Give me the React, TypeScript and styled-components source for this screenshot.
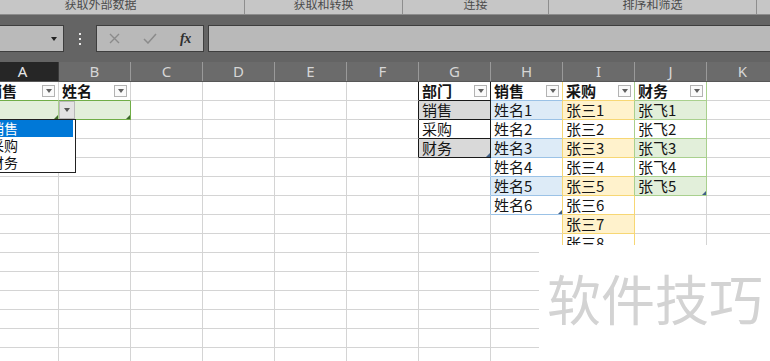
import styled, { createGlobalStyle } from "styled-components";

const GlobalStyle = createGlobalStyle`
  html, body {
    margin: 0;
    padding: 0;
  }
  body {
    width: 770px;
    height: 361px;
    overflow: hidden;
    background: #fff;
    font-family: "Noto Sans CJK SC", "Noto Sans", sans-serif;
  }
`;

type CellSpec = {
  text?: string;
  bg?: string;
  right?: string;
  bottom?: string;
  filter?: boolean;
  handle?: string;
  picker?: boolean;
};

const COLS = ["A", "B", "C", "D", "E", "F", "G", "H", "I", "J", "K"];
const ROW_COUNT = 15;

const BLUE = { bg: "#ddebf7", line: "#9bc2e6" };
const GOLD = { bg: "#fff2cc", line: "#f7d774" };
const GREEN = { bg: "#e2efda", line: "#a9d08e" };
const BLACK = "#1a1a1a";

const groups = [
  { label: "获取外部数据", width: 288, first: true },
  { label: "获取和转换", width: 158 },
  { label: "连接", width: 146 },
  { label: "排序和筛选", width: 208 },
  { label: "", width: 60 },
];

const buildCells = () => {
  const cells: Record<string, CellSpec> = {};
  const set = (key: string, spec: CellSpec) => {
    cells[key] = { ...cells[key], ...spec };
  };

  set("A1", { text: "销售", filter: true, bottom: "#70ad47" });
  set("B1", { text: "姓名", filter: true, bottom: "#70ad47" });
  set("A2", { bg: GREEN.bg, bottom: "#70ad47", right: "#a9d08e", picker: true, handle: "#3d6b2a" });
  set("B2", { bg: GREEN.bg, bottom: "#70ad47", right: "#70ad47", handle: "#3d6b2a" });

  // 部门 column
  set("G1", { text: "部门", filter: true, right: BLACK, bottom: BLACK });
  ["销售", "采购", "财务"].forEach((t, i) => {
    set(`G${i + 2}`, {
      text: t,
      bg: i % 2 === 0 ? "#d9d9d9" : undefined,
      right: BLACK,
      bottom: BLACK,
      handle: i === 2 ? "#3f5f86" : undefined,
    });
  });
  for (let r = 1; r <= 4; r++) set(`F${r}`, { right: BLACK });
  for (let r = 5; r <= 7; r++) set(`G${r}`, { right: BLUE.line });

  // 销售 column
  set("H1", { text: "销售", filter: true, right: GOLD.line, bottom: BLUE.line });
  for (let i = 1; i <= 6; i++) {
    set(`H${i + 1}`, {
      text: `姓名${i}`,
      bg: i % 2 === 1 ? BLUE.bg : undefined,
      right: GOLD.line,
      bottom: BLUE.line,
      handle: i === 6 ? "#3f5f86" : undefined,
    });
  }
  for (let r = 8; r <= 9; r++) set(`H${r}`, { right: GOLD.line });

  // 采购 column
  set("I1", { text: "采购", filter: true, right: GREEN.line, bottom: GOLD.line });
  for (let i = 1; i <= 8; i++) {
    set(`I${i + 1}`, {
      text: `张三${i}`,
      bg: i % 2 === 1 ? GOLD.bg : undefined,
      right: i <= 5 ? GREEN.line : GOLD.line,
      bottom: GOLD.line,
    });
  }

  // 财务 column
  set("J1", { text: "财务", filter: true, right: GREEN.line, bottom: GREEN.line });
  for (let i = 1; i <= 5; i++) {
    set(`J${i + 1}`, {
      text: `张飞${i}`,
      bg: i % 2 === 1 ? GREEN.bg : undefined,
      right: GREEN.line,
      bottom: GREEN.line,
      handle: i === 5 ? "#3f5f86" : undefined,
    });
  }

  return cells;
};

const cells = buildCells();

const App = () => {
  const rows = Array.from({ length: ROW_COUNT }, (_, i) => i + 1);

  return (
    <Page>
      <GlobalStyle />

      <Ribbon>
        {groups.map((g, i) => (
          <GroupLabel key={i} $width={g.width} $first={g.first}>
            {g.label}
          </GroupLabel>
        ))}
      </Ribbon>

      <FormulaArea>
        <NameBox>
          <Caret />
        </NameBox>
        <Grip>
          <i />
          <i />
          <i />
        </Grip>
        <ButtonBox>
          <ToolSlot>
            <svg width="11" height="11" viewBox="0 0 11 11">
              <path d="M1 1 L10 10 M10 1 L1 10" stroke="#8b8b8b" strokeWidth="1.4" />
            </svg>
          </ToolSlot>
          <ToolSlot>
            <svg width="14" height="11" viewBox="0 0 14 11">
              <path d="M1 6 L5 10 L13 1" stroke="#8b8b8b" strokeWidth="1.5" fill="none" />
            </svg>
          </ToolSlot>
          <ToolSlot>
            <Fx>fx</Fx>
          </ToolSlot>
        </ButtonBox>
        <FormulaInput />
      </FormulaArea>

      <Sheet>
        <HeaderRow>
          {COLS.map((c) => (
            <ColHead key={c} $active={c === "A"}>
              {c}
            </ColHead>
          ))}
        </HeaderRow>

        {rows.map((r) => (
          <Row key={r}>
            {COLS.map((c) => {
              const spec = cells[`${c}${r}`] ?? {};
              return (
                <Cell
                  key={c}
                  $bg={spec.bg}
                  $right={spec.right}
                  $bottom={spec.bottom}
                  $lift={spec.picker}
                >
                  {spec.text && (
                    <CellText $first={c === "A"} $head={r === 1}>
                      {spec.text}
                    </CellText>
                  )}
                  {spec.filter && <FilterButton />}
                  {spec.handle && <Handle $color={spec.handle} />}
                  {spec.picker && (
                    <>
                      <PickerButton />
                      <PickList>
                        <PickItem $selected>销售</PickItem>
                        <PickItem>采购</PickItem>
                        <PickItem>财务</PickItem>
                      </PickList>
                    </>
                  )}
                </Cell>
              );
            })}
          </Row>
        ))}
      </Sheet>

      <Watermark>软件技巧</Watermark>
    </Page>
  );
};

const Page = styled.div`
  position: relative;
  width: 770px;
  height: 361px;
  overflow: hidden;
`;

const Ribbon = styled.div`
  display: flex;
  height: 15px;
  box-sizing: border-box;
  background: #c6c6c6;
  border-bottom: 1px solid #8c8c8c;
  overflow: hidden;
`;

const GroupLabel = styled.div<{ $width: number; $first?: boolean }>`
  flex: none;
  width: ${({ $width }) => $width}px;
  margin-left: ${({ $first }) => ($first ? "-43px" : "0")};
  box-sizing: border-box;
  border-right: 1px solid #8e8e8e;
  text-align: center;
  font-size: 12px;
  line-height: 8px;
  color: #4b4b4b;
  white-space: nowrap;
`;

const FormulaArea = styled.div`
  display: flex;
  align-items: flex-start;
  height: 47px;
  box-sizing: border-box;
  padding-top: 10px;
  background: #646464;
`;

const NameBox = styled.div`
  flex: none;
  margin-left: -20px;
  width: 84px;
  height: 27px;
  box-sizing: border-box;
  background: #bababa;
  border: 1px solid #3e3e3e;
  display: flex;
  align-items: center;
  justify-content: flex-end;
  padding-right: 6px;
`;

const Caret = styled.span`
  width: 0;
  height: 0;
  border-left: 3.5px solid transparent;
  border-right: 3.5px solid transparent;
  border-top: 4px solid #222;
`;

const Grip = styled.div`
  flex: none;
  width: 32px;
  height: 27px;
  display: flex;
  flex-direction: column;
  align-items: center;
  justify-content: center;
  gap: 3px;

  & i {
    width: 2px;
    height: 2px;
    background: #eaeaea;
  }
`;

const ButtonBox = styled.div`
  flex: none;
  display: flex;
  width: 108px;
  height: 27px;
  box-sizing: border-box;
  background: #b9b9b9;
  border: 1px solid #3e3e3e;
`;

const ToolSlot = styled.div`
  width: 36px;
  display: flex;
  align-items: center;
  justify-content: center;
`;

const Fx = styled.span`
  font-family: "Liberation Serif", serif;
  font-style: italic;
  font-weight: bold;
  font-size: 14px;
  color: #2f2f2f;
  letter-spacing: -0.5px;
`;

const FormulaInput = styled.div`
  flex: 1;
  margin-left: 4px;
  margin-right: -4px;
  height: 27px;
  box-sizing: border-box;
  background: #b9b9b9;
  border: 1px solid #3e3e3e;
`;

const Sheet = styled.div`
  margin-left: -13px;
`;

const gridCols = `repeat(${COLS.length}, 72px)`;

const HeaderRow = styled.div`
  display: grid;
  grid-template-columns: ${gridCols};
  height: 20px;
  background: #6b6b6b;
  border-bottom: 1px solid #575757;
  box-sizing: border-box;
`;

const ColHead = styled.div<{ $active?: boolean }>`
  box-sizing: border-box;
  border-right: 1px solid ${({ $active }) => ($active ? "#3a3a3a" : "#9a9a9a")};
  background: ${({ $active }) => ($active ? "#262626" : "transparent")};
  color: ${({ $active }) => ($active ? "#e6e6e6" : "#d6d6d6")};
  font-family: "Noto Sans", sans-serif;
  font-size: 15px;
  line-height: 19px;
  text-align: center;
`;

const Row = styled.div`
  display: grid;
  grid-template-columns: ${gridCols};
  height: 19px;
`;

const Cell = styled.div<{ $bg?: string; $right?: string; $bottom?: string; $lift?: boolean }>`
  position: relative;
  z-index: ${({ $lift }) => ($lift ? 5 : "auto")};
  box-sizing: border-box;
  height: 19px;
  background: ${({ $bg }) => $bg ?? "#fff"};
  border-right: 1px solid ${({ $right }) => $right ?? "#d4d4d4"};
  border-bottom: 1px solid ${({ $bottom }) => $bottom ?? "#d4d4d4"};
  white-space: nowrap;
`;

const CellText = styled.span<{ $first?: boolean; $head?: boolean }>`
  display: block;
  padding-left: ${({ $first }) => ($first ? "0" : "3px")};
  font-size: 15px;
  line-height: 18px;
  font-weight: ${({ $head }) => ($head ? 600 : 400)};
  color: #151515;
`;

const FilterButton = styled.span`
  position: absolute;
  right: 3px;
  top: 3px;
  width: 13px;
  height: 12px;
  box-sizing: border-box;
  border: 1px solid #b3b3b3;
  background: #fafafa;
  display: flex;
  align-items: center;
  justify-content: center;

  &::after {
    content: "";
    border-left: 3.5px solid transparent;
    border-right: 3.5px solid transparent;
    border-top: 4px solid #606060;
  }
`;

const Handle = styled.span<{ $color: string }>`
  position: absolute;
  right: 0;
  bottom: 0;
  width: 0;
  height: 0;
  border-left: 4px solid transparent;
  border-bottom: 4px solid ${({ $color }) => $color};
`;

const PickerButton = styled.span`
  position: absolute;
  left: calc(100% + 1px);
  top: 0;
  width: 16px;
  height: 18px;
  box-sizing: border-box;
  background: #e3e3e3;
  border: 1px solid #b9b9b9;
  display: flex;
  align-items: center;
  justify-content: center;

  &::after {
    content: "";
    border-left: 3.5px solid transparent;
    border-right: 3.5px solid transparent;
    border-top: 4px solid #555;
  }
`;

const PickList = styled.div`
  position: absolute;
  left: -2px;
  top: 100%;
  width: 91px;
  box-sizing: border-box;
  border: 1px solid #222;
  background: #fff;
  padding-bottom: 1px;
`;

const PickItem = styled.div<{ $selected?: boolean }>`
  height: 17px;
  margin-right: 2px;
  font-size: 14px;
  line-height: 17px;
  padding-left: 4px;
  background: ${({ $selected }) => ($selected ? "#0078d7" : "transparent")};
  color: ${({ $selected }) => ($selected ? "#fff" : "#111")};
`;

const Watermark = styled.div`
  position: absolute;
  left: 539px;
  top: 245px;
  right: 0;
  bottom: 0;
  background: #fff;
  box-sizing: border-box;
  padding: 26px 0 0 8px;
  font-size: 54px;
  line-height: 54px;
  color: #d3d3d3;
  white-space: nowrap;
`;

export default App;
